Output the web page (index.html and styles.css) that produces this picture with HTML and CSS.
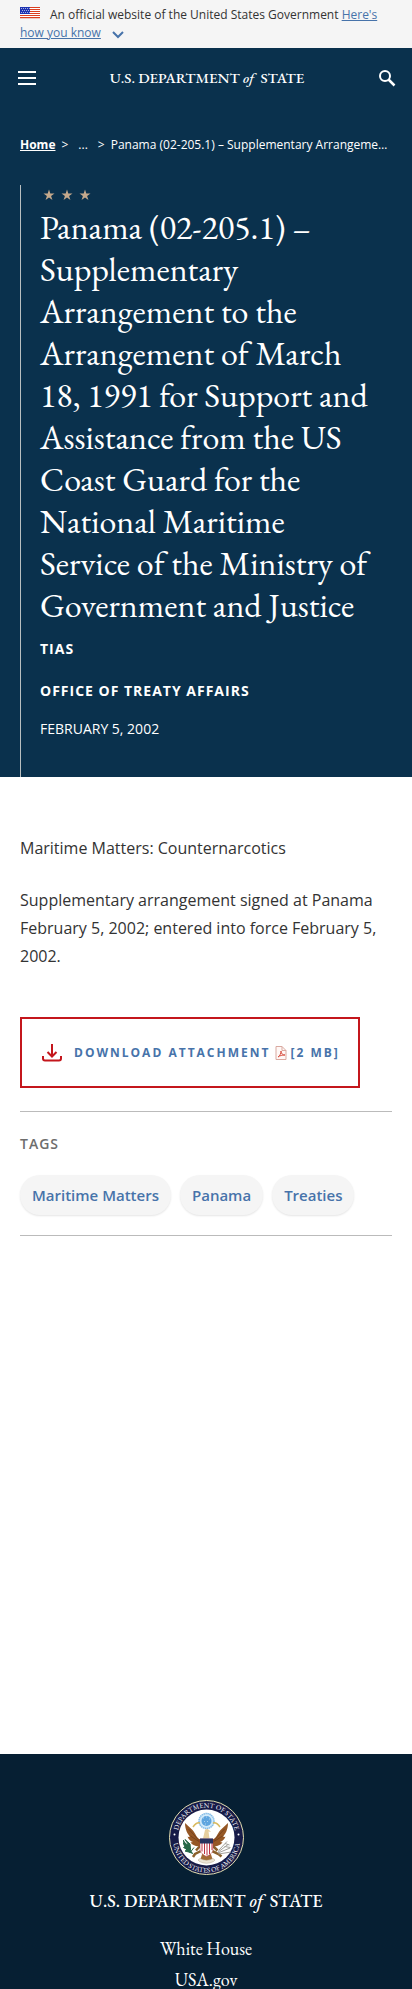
FILE: index.html
```
<!DOCTYPE html>
<html lang="en">
<head>
<meta charset="utf-8">
<meta name="viewport" content="width=device-width, initial-scale=1">
<title>Panama (02-205.1) - United States Department of State</title>
<link rel="stylesheet" href="styles.css">
</head>
<body>
<div class="banner">
  <svg class="flag" viewBox="0 0 20 12" aria-hidden="true">
    <rect width="20" height="12" fill="#fff"/>
    <path d="M0 .5h20M0 2.500h20M0 4.500h20M0 6.500h20M0 8.500h20M0 10.500h20" stroke="#db3e1f"/>
    <path d="M0 11.500h20" stroke="#f0c8c0"/>
    <rect width="10" height="7" fill="#1e33b1"/>
    <path d="M1 1.500h9M2 3.500h8M1 5.500h9" stroke="#a5afe0" stroke-dasharray="1 1"/>
  </svg><span>An official website of the United States Government</span>
  <a href="#">Here's how you know</a>
  <svg class="chevron" viewBox="0 0 12 8" aria-hidden="true"><path d="M1 1l5 5 5-5" fill="none" stroke="#4773aa" stroke-width="2"/></svg>
</div>

<header class="header">
  <button class="icon-button" aria-label="Menu">
    <svg viewBox="0 0 18 16" width="18" height="16"><path d="M0 2h18M0 8h18M0 14h18" stroke="#fff" stroke-width="2"/></svg>
  </button>
  <a class="wordmark" href="#">U.S. DEPARTMENT <i>of</i> STATE</a>
  <button class="icon-button" aria-label="Search">
    <svg viewBox="0 0 18 18" width="18" height="18"><circle cx="7" cy="7" r="5" fill="none" stroke="#fff" stroke-width="2"/><path d="M10.500 10.500l6 6" stroke="#fff" stroke-width="2.500"/></svg>
  </button>
</header>

<main>
  <section class="hero">
    <nav class="breadcrumb" aria-label="Breadcrumb">
      <a href="#">Home</a><span>&gt;</span><span class="dots">...</span><span>&gt;</span>
      <span class="current">Panama (02-205.1) – Supplementary Arrangement to the Arrangement of March 18, 1991</span>
    </nav>
    <div class="hero-body">
      <svg class="stars" viewBox="0 0 50 12" aria-hidden="true">
        <defs><path id="star" d="M6 .5l1.300 4h4.200l-3.400 2.500 1.300 4L6 8.500 2.600 11l1.300-4L.5 4.500h4.200z"/></defs>
        <g fill="#c5a98c"><use href="#star"/><use href="#star" x="18"/><use href="#star" x="36"/></g>
      </svg>
      <h1>Panama (02-205.1) – Supplementary Arrangement to the Arrangement of March 18, 1991 for Support and Assistance from the US Coast Guard for the National Maritime Service of the Ministry of Government and Justice</h1>
      <p class="kicker">TIAS</p>
      <p class="kicker office">OFFICE OF TREATY AFFAIRS</p>
      <p class="date">FEBRUARY 5, 2002</p>
    </div>
  </section>

  <article class="content">
    <p>Maritime Matters: Counternarcotics</p>
    <p>Supplementary arrangement signed at Panama February 5, 2002; entered into force February 5, 2002.</p>
    <a class="download" href="#">
      <svg class="download-icon" viewBox="0 0 20 18" aria-hidden="true"><path d="M10 0v12M5.500 8l4.500 4.500L14.500 8M1 12v2.500q0 2 2 2h14q2 0 2-2V12" fill="none" stroke="#c4161c" stroke-width="2"/></svg>
      <span>DOWNLOAD ATTACHMENT</span>
      <svg class="pdf-icon" viewBox="0 0 12 14" aria-hidden="true"><path d="M1 .5h6l4 4v9H1z" fill="#fff8f6" stroke="#d9a9a0"/><path d="M7 .5v4h4" fill="none" stroke="#d9a9a0"/><path d="M3 11c2-1 3-4 3-6 0 3 2 4 4 4-3 0-5 .5-7 2" fill="none" stroke="#d95345"/></svg>
      <span>[2 MB]</span>
    </a>
    <section class="tags">
      <h2>TAGS</h2>
      <div class="tag-list"><a href="#">Maritime Matters</a><a href="#">Panama</a><a href="#">Treaties</a></div>
    </section>
  </article>
</main>

<footer class="footer">
  <svg class="seal" viewBox="0 0 150 150" role="img" aria-label="Department of State seal">
    <defs>
      <path id="upper" d="M18 84A58 58 0 1 1 132 84"/>
      <path id="lower" d="M8 78A67 67 0 0 0 142 78"/>
    </defs>
    <circle cx="75" cy="75" r="74" fill="#171b48" stroke="#e4dfb0" stroke-width="2"/>
    <circle cx="75" cy="75" r="56" fill="#fff"/>
    <g class="seal-text">
      <text><textPath href="#upper" startOffset="50%" text-anchor="middle">DEPARTMENT OF STATE</textPath></text>
      <text><textPath href="#lower" startOffset="50%" text-anchor="middle">UNITED STATES OF AMERICA</textPath></text>
    </g>
    <g fill="#fff"><circle cx="11" cy="69" r="2"/><circle cx="139" cy="69" r="2"/></g>
    <circle cx="75" cy="42" r="15" fill="#d2eafa" stroke="#83bce7" stroke-width="3" stroke-dasharray="3 1"/>
    <circle cx="75" cy="42" r="10" fill="#5ea5df"/>
    <path d="M69 36h1M75 34h1M80 38h1M70 43h1M77 43h1M73 48h1" stroke="#fff" stroke-width="2"/>
    <path d="M48 54q7-10 14-8M102 54q-7-10-14-8" fill="none" stroke="#d9b95d" stroke-width="3"/>
    <path d="M67 80C55 79 53 66 47 60L32 46c0 14 6 23 10 27-2 1-4 1-5 0 3 8 8 10 11 11l-5 1c7 8 16 9 24 5zM83 80c12-1 14-14 20-20l15-14c0 14-6 23-10 27 2 1 4 1 5 0-3 8-8 10-11 11l5 1c-7 8-16 9-24 5z" fill="#955725"/>
    <path d="M39 58l22 24M43 72l20 13M111 58L89 82M107 72L87 85" stroke="#5b2f16" stroke-width="1"/>
    <path d="M72 60q4-4 8 0l4 4-5-1 2 14H68z" fill="#e7cf9e"/>
    <path d="M66 101L52 108l-4 6M84 101l15 7 6 5M54 101l9-10M97 101l-10-10" fill="none" stroke="#8b602b" stroke-width="5"/>
    <path d="M67 106q8-6 16 0l5 15-13 3-13-3z" fill="#a36b35"/>
    <path d="M62 78h26v20c0 8-7 12-13 15-6-3-13-7-13-15z" fill="#fff" stroke="#b23341"/>
    <path d="M66 86v17M71 86v22M76 86v25M81 86v22M86 86v14" stroke="#be3143" stroke-width="2"/>
    <path d="M62 77h26v10H62z" fill="#27315d"/>
    <path d="M48 107C36 104 29 95 29 80M38 100l-9-5 9-1-10-7 11 2-7-10 10 9 1 11M43 105l-11-3 12-5M43 104l7-9" fill="#256747" stroke="#256747" stroke-width="2"/>
    <path d="M97 105l21-16M98 106l24-10M99 108l25-4M99 101l17-18M112 87l9 3M111 93l12 2" stroke="#a3a19c" stroke-width="2"/>
    <path d="M62 117q13 7 26 0l4 3-3 3q-14 7-28 0l-3-3z" fill="#ece5d6" stroke="#b5a68c"/>
  </svg>
  <a class="wordmark footer-mark" href="#">U.S. DEPARTMENT <i>of</i> STATE</a>
  <nav class="footer-links" aria-label="Footer"><a href="#">White House</a><a href="#">USA.gov</a></nav>
</footer>
</body>
</html>
```

FILE: styles.css
```
* { box-sizing: border-box; }

body {
  margin: 0;
  height: 100vh;
  overflow: hidden;
  background: #fff;
  color: #333;
  font-family: "Open Sans", "Noto Sans", sans-serif;
}

a { color: #4773aa; }
h1, h2, p { margin: 0; }
svg { flex-shrink: 0; }

.banner {
  padding: 6px 20px;
  background: #f5f5f5;
  font-size: 12px;
  line-height: 18px;
}
.flag { width: 20px; height: 12px; margin-right: 10px; }
.chevron { width: 12px; height: 8px; margin-left: 8px; vertical-align: -2px; }

.header {
  display: flex;
  align-items: center;
  justify-content: space-between;
  height: 60px;
  padding: 0 16px 0 18px;
  background: #0a314d;
}
.icon-button {
  display: flex;
  padding: 0;
  border: 0;
  background: none;
}
.wordmark {
  color: #fff;
  font-family: "EB Garamond", "Liberation Serif", serif;
  font-size: 15px;
  font-weight: 500;
  line-height: 20px;
  text-decoration: none;
}
.wordmark i { margin-right: 3px; }

.hero { padding: 28px 20px 0; background: #0a314d; color: #fff; }
.breadcrumb {
  display: flex;
  gap: 6px;
  font-size: 12px;
  line-height: 18px;
}
.breadcrumb a { color: #fff; font-weight: 700; }
.dots { padding: 0 4px; }
.current {
  flex: 1;
  min-width: 0;
  overflow: hidden;
  text-overflow: ellipsis;
  white-space: nowrap;
}
.hero-body {
  margin-top: 31px;
  padding: 4px 18px 36px 19px;
  border-left: 1px solid #b9bfc0;
}
.stars { display: block; width: 50px; height: 12px; margin-left: 3px; }
h1 {
  padding-top: 5px;
  font-family: "EB Garamond", "Liberation Serif", serif;
  font-size: 34px;
  font-weight: 400;
  line-height: 42px;
}
.kicker {
  margin-top: 11px;
  font-size: 14px;
  font-weight: 700;
  letter-spacing: 1px;
  line-height: 24px;
}
.office { margin-top: 18px; }
.date { margin-top: 14px; font-size: 14px; line-height: 24px; }

.content { padding: 57px 20px 518px; }
.content p {
  margin-bottom: 24px;
  font-size: 16px;
  line-height: 28px;
}
.download {
  display: inline-flex;
  align-items: center;
  height: 71px;
  margin-top: 23px;
  padding: 0 18px 0 20px;
  border: 2px solid #c4161c;
  font-size: 12px;
  font-weight: 700;
  letter-spacing: 2px;
  line-height: 20px;
  text-decoration: none;
}
.download-icon { width: 20px; height: 18px; margin-right: 12px; }
.pdf-icon { width: 12px; height: 14px; margin: 0 3px 0 5px; }

.tags {
  margin-top: 23px;
  padding: 22px 0 20px;
  border-top: 1px solid #bbb;
  border-bottom: 1px solid #bbb;
}
.tags h2 {
  color: #6d6d6d;
  font-size: 14px;
  font-weight: 600;
  letter-spacing: 1px;
  line-height: 20px;
}
.tag-list { display: flex; flex-wrap: wrap; gap: 9px; margin-top: 21px; }
.tag-list a {
  padding: 10px 12px;
  border-radius: 20px;
  background: #f5f5f5;
  box-shadow: 0 1px 2px #e5e5e5;
  font-size: 15px;
  font-weight: 600;
  line-height: 20px;
  text-decoration: none;
}

.footer {
  display: flex;
  flex-direction: column;
  align-items: center;
  padding: 46px 20px 24px;
  background: #061f33;
}
.seal { width: 75px; height: 75px; }
.seal-text {
  fill: #fff;
  font-family: "EB Garamond", "Liberation Serif", serif;
  font-size: 14px;
}
.footer-mark { margin-top: 14px; font-size: 18px; line-height: 24px; }
.footer-links {
  display: flex;
  flex-direction: column;
  align-items: center;
  margin-top: 20px;
  font-family: "EB Garamond", "Liberation Serif", serif;
  font-size: 18px;
  line-height: 31px;
}
.footer-links a { color: #fff; text-decoration: none; }
```
